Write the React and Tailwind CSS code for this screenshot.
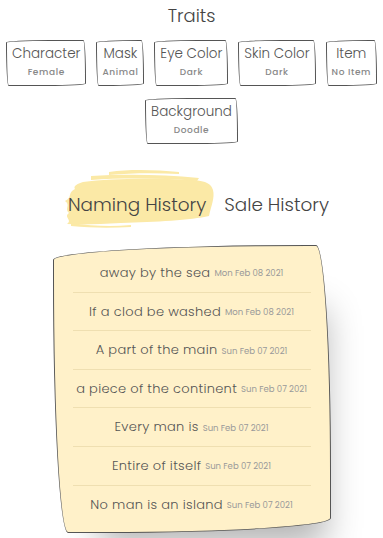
import React from "react";

const traits = [
  ["Character", "Female"],
  ["Mask", "Animal"],
  ["Eye Color", "Dark"],
  ["Skin Color", "Dark"],
  ["Item", "No Item"],
  ["Background", "Doodle"],
];

const names = [
  ["away by the sea", "Mon Feb 08 2021"],
  ["If a clod be washed", "Mon Feb 08 2021"],
  ["A part of the main", "Sun Feb 07 2021"],
  ["a piece of the continent", "Sun Feb 07 2021"],
  ["Every man is", "Sun Feb 07 2021"],
  ["Entire of itself", "Sun Feb 07 2021"],
  ["No man is an island", "Sun Feb 07 2021"],
];

function Brush() {
  return (
    <svg className="absolute left-[-9px] top-[-24px] w-[162px] h-[60px]" viewBox="0 0 158 60" fill="#fbe9a6">
      <path d="M22 14 C 50 10, 95 10, 132 12 C 146 13, 150 16, 152 22 C 154 30, 150 38, 148 48 C 130 52, 95 54, 60 55 C 40 56, 22 57, 6 56 C 12 52, 2 49, 8 45 C 3 41, 10 37, 4 33 C 12 29, 6 25, 14 21 C 12 18, 16 16, 22 14 Z" />
      <path d="M48 4 C 70 1, 95 2, 118 4 L 118 6 C 95 5, 70 5, 48 7 Z" />
      <path d="M30 8 C 60 6, 100 6, 138 10 L 136 13 C 100 10, 60 10, 30 12 Z" />
      <path d="M10 55 C 30 58, 50 59, 70 57 L 70 59 C 50 60, 30 60, 10 58 Z" />
    </svg>
  );
}

export default function App() {
  const sketch = "rounded-[255px_15px_225px_15px/15px_225px_15px_255px]";
  return (
    <div
      className="w-[383px] h-[538px] bg-white overflow-hidden flex flex-col items-center text-[#555]"
      style={{ fontFamily: "Poppins, Inter, 'Noto Sans', sans-serif" }}
    >
      <h2 className="mt-[3px] text-[18px] leading-[26px] font-light text-[#444]">Traits</h2>
      <div className="mt-[11px] flex flex-wrap justify-center gap-x-[10px] gap-y-[12px] w-[383px]">
        {traits.map(([t, v]) => (
          <div
            key={t}
            className={`flex flex-col items-center px-[5px] pt-[3px] pb-[6px] border-[1.5px] border-[#555] bg-white ${sketch} shadow-[20px_38px_34px_-26px_rgba(0,0,0,0.2)]`}
          >
            <span className="text-[13.5px] leading-[20px] font-light text-[#555]">{t}</span>
            <span className="mt-[2px] text-[9px] leading-[13px] font-medium tracking-[0.6px] text-[#888]">{v}</span>
          </div>
        ))}
      </div>
      <div className="mt-[48px] pl-[14px] flex items-center gap-[18px] text-[18.4px] leading-[26px] font-light text-[#444]">
        <div className="relative">
          <Brush />
          <span className="relative">Naming History</span>
        </div>
        <span>Sale History</span>
      </div>
      <div
        className={`mt-[27px] w-[278px] bg-[#fff1c9] border-[1.5px] border-[#555] ${sketch} shadow-[20px_38px_34px_-26px_rgba(0,0,0,0.3)] px-[19px] pt-[8px] pb-[8px]`}
      >
        {names.map(([n, d], i) => (
          <div
            key={i}
            className={`h-[38.6px] flex items-center justify-center gap-[4px] ${i < names.length - 1 ? "border-b border-[#efdfb1]" : ""}`}
          >
            <span className="text-[13px] font-light text-[#555] tracking-[0.3px]">{n}</span>
            <span className="text-[8.5px] text-[#999] mt-[2px]">{d}</span>
          </div>
        ))}
      </div>
    </div>
  );
}
